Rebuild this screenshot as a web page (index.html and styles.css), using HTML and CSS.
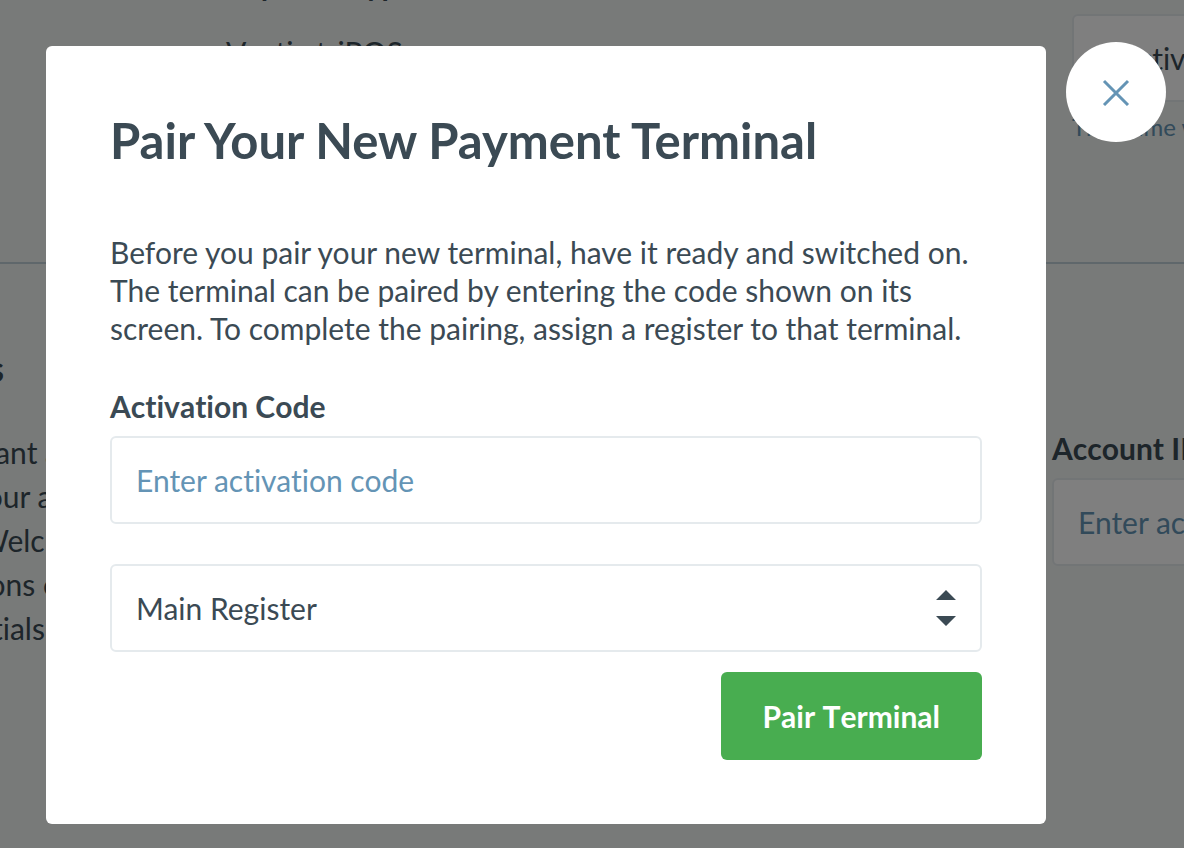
FILE: index.html
```html
<!DOCTYPE html>
<html lang="en">
<head>
<meta charset="utf-8">
<title>Pair Your New Payment Terminal</title>
<link rel="stylesheet" href="styles.css">
</head>
<body>
<main class="page">
  <section class="section section-type">
    <div class="summary">
      <strong>Payment Type</strong>
      <span>Vantiv triPOS</span>
    </div>
    <div class="field">
      <label class="label" for="status">Status</label>
      <input class="control" id="status" type="text" value="Inactive">
      <p class="help">The name will show</p>
    </div>
  </section>
  <section class="section section-account">
    <div class="intro">
      <h2 class="intro-title">Credentials</h2>
      <p class="intro-text">merchant a<br>your a&nbsp;<br>Welc&nbsp;&nbsp;<br>sections o<br>credentials.)</p>
    </div>
    <div class="field">
      <label class="label" for="account">Account ID</label>
      <input class="control" id="account" type="text" placeholder="Enter account ID">
    </div>
  </section>
</main>
<div class="overlay">
  <form class="modal" role="dialog" aria-labelledby="modal-title">
    <h1 class="title" id="modal-title">Pair Your New Payment Terminal</h1>
    <p class="text">Before you pair your new terminal, have it ready and switched on. The terminal can be paired by entering the code shown on its screen. To complete the pairing, assign a register to that terminal.</p>
    <div class="field">
      <label class="label" for="code">Activation Code</label>
      <input class="control" id="code" type="text" placeholder="Enter activation code">
    </div>
    <div class="select">
      <select class="control" aria-label="Register"><option>Main Register</option></select>
      <svg class="arrows" width="20" height="36" viewBox="0 0 20 36" aria-hidden="true"><path d="M10 0 20 10H0zM0 26H20L10 36z"/></svg>
    </div>
    <button class="submit" type="submit">Pair Terminal</button>
  </form>
  <button class="close" type="button" aria-label="Close">
    <svg width="28" height="28" viewBox="0 0 28 28" aria-hidden="true"><path d="M2 3 26 27M26 3 2 27"/></svg>
  </button>
</div>
</body>
</html>
```
FILE: styles.css
```css
* { box-sizing: border-box; }

body {
  margin: 0;
  font: 30px/38px Lato, "Open Sans", sans-serif;
  font-variant-ligatures: none;
  color: #3b4a54;
  background: #f1f4f2;
  overflow: hidden;
}

h1, h2, p { margin: 0; }

input, select, button {
  font: inherit;
  font-variant-ligatures: none;
  color: inherit;
}

/* Settings page under the overlay, scrolled to the account section */
.page {
  height: 100vh;
  overflow: hidden;
}

.section {
  display: grid;
  align-items: start;
}

.section-type {
  grid-template-columns: 1fr 360px;
  height: 299px;
  margin: -35px -248px 0 226px;
}

.section-account {
  grid-template-columns: 1fr 360px;
  margin-right: -228px;
  padding-top: 82px;
  box-shadow: 0 -2px #bfced6;
}

.section-account .field { padding-top: 83px; }

.summary {
  display: flex;
  flex-direction: column;
  gap: 30px;
}

.intro {
  width: 460px;
  margin-left: -400px;
  text-align: right;
}

.intro-title {
  padding-right: 56px;
  font-size: 36px;
  line-height: 44px;
}

.intro-text {
  margin-top: 40px;
  line-height: 44px;
}

.help {
  margin-top: 8px;
  font-size: 24px;
  line-height: 34px;
  color: #6494b5;
}

.label {
  display: block;
  margin-bottom: 11px;
  font-weight: 700;
}

.control {
  display: block;
  width: 100%;
  height: 88px;
  padding: 0 24px;
  border: 2px solid #e5eaed;
  border-radius: 6px;
  background: #fff;
  appearance: none;
}

.control::placeholder { color: #6494b5; opacity: 1; }

.overlay {
  position: fixed;
  inset: 0;
  display: flex;
  align-items: flex-start;
  gap: 20px;
  padding: 42px 18px 24px 46px;
  background: rgba(0, 0, 0, 0.5);
  overflow: auto;
}

.modal {
  flex: 1;
  display: flex;
  flex-direction: column;
  margin-top: 4px;
  padding: 64px;
  border-radius: 6px;
  background: #fff;
}

.title {
  font-size: 49px;
  line-height: 60px;
}

.label, .submit { font-kerning: none; }

.text { margin: 63px 0 40px; }

.select {
  position: relative;
  margin: 40px 0 20px;
}

.arrows {
  position: absolute;
  top: 26px;
  right: 26px;
  fill: #3b4a54;
  pointer-events: none;
}

.submit {
  align-self: flex-end;
  height: 88px;
  padding: 0 42px;
  border: 0;
  border-radius: 6px;
  background: #48ad50;
  color: #fff;
  font-weight: 700;
}

.close {
  display: flex;
  align-items: center;
  justify-content: center;
  flex: none;
  width: 100px;
  height: 100px;
  padding: 0;
  border: 0;
  border-radius: 50%;
  background: #fff;
}

.close path {
  fill: none;
  stroke: #6494b5;
  stroke-width: 3;
}
```
